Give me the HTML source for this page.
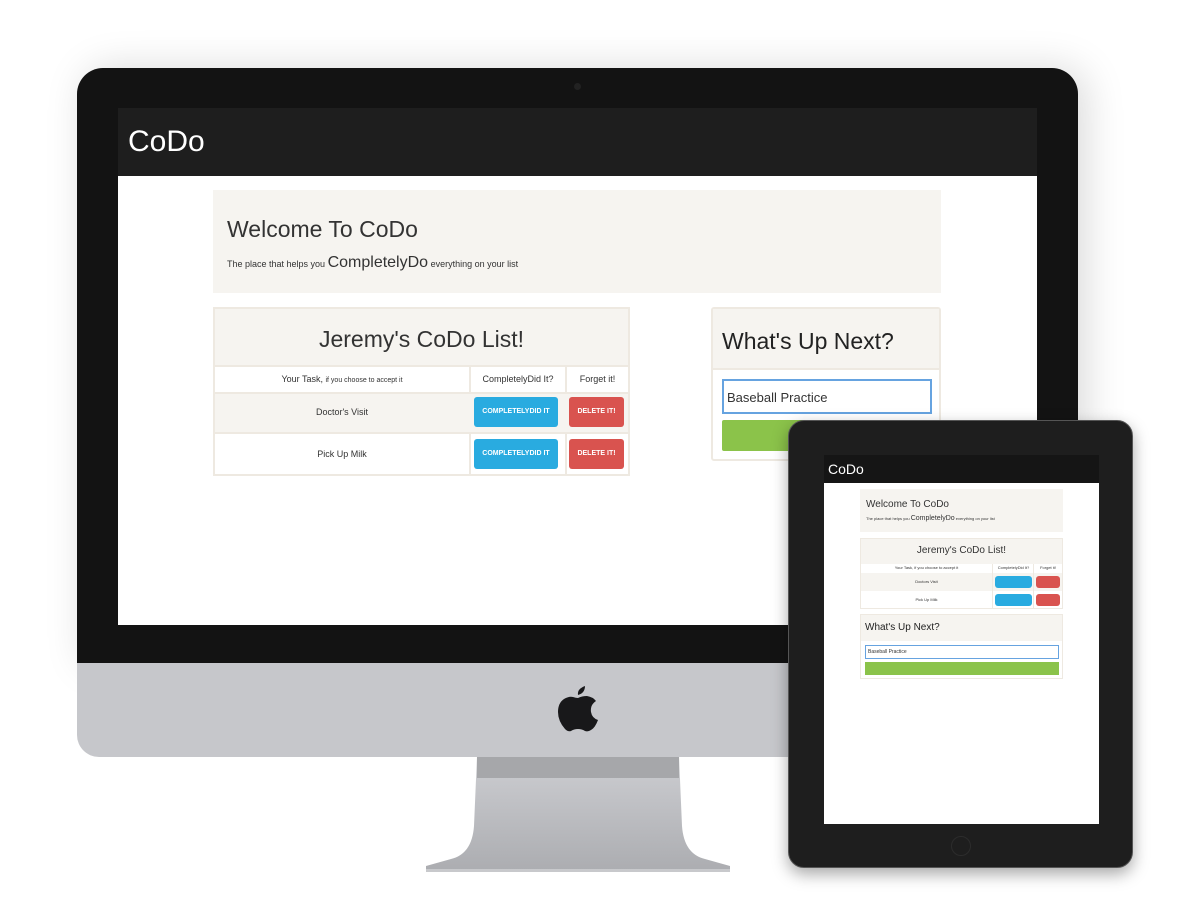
<!DOCTYPE html>
<html><head><meta charset="utf-8"><style>
*{margin:0;padding:0;box-sizing:border-box}
body{width:1196px;height:923px;background:#fff;position:relative;overflow:hidden;font-family:"Liberation Sans",sans-serif;color:#333}
.a{position:absolute}
.imac{left:77px;top:68px;width:1001px;height:596px;background:#131313;border-radius:26px 26px 0 0;box-shadow:8px 0 40px rgba(0,0,0,.15)}
.chin{left:77px;top:663px;width:1001px;height:94px;background:linear-gradient(90deg,#c6c7cb 0,#c6c7cb 80%,#a9aaae 100%);border-radius:0 0 22px 22px}
.scr{left:118px;top:108px;width:919px;height:517px;background:#fff;overflow:hidden}
.pan{background:#f6f4f0;border:1px solid #ebe6de}
.btnb{background:#29abe0;color:#fff;font-weight:bold;text-align:center;border-radius:3px}
.btnr{background:#d9534f;color:#fff;font-weight:bold;text-align:center;border-radius:3px}
.c{text-align:center}
</style></head><body>
<!-- stand -->
<svg class="a" style="left:420px;top:756px" width="320" height="120">
<defs><linearGradient id="g" x1="0" y1="0" x2="0" y2="1"><stop offset="0" stop-color="#cdced2"/><stop offset="1" stop-color="#acadb1"/></linearGradient></defs>
<path d="M57 0 H259 L262 70 Q264 98 285 103 L310 110 L310 114 H6 L6 110 L31 103 Q52 98 54 70 Z" fill="url(#g)"/>
<rect x="57" y="0" width="202" height="22" fill="#a6a7aa"/>
<rect x="6" y="113" width="304" height="3" fill="#c8c9cc"/>
</svg>
<div class="a imac"></div>
<div class="a" style="left:574px;top:83px;width:7px;height:7px;border-radius:50%;background:#222"></div>
<div class="a chin"></div>
<svg class="a" style="left:557px;top:684px" width="42" height="48" viewBox="0 0 42 48"><path d="M28 2 Q28 9 21 11 Q20 5 28 2Z M21 14 Q25 12 30 12 Q36 13 39 17 Q33 21 34 28 Q35 34 41 36 Q38 44 34 46 Q31 48 28 47 Q25 45 21 45 Q17 45 14 47 Q11 48 8 45 Q1 37 1 28 Q1 19 7 15 Q12 12 16 13 Q19 14 21 14Z" fill="#18181a"/></svg>
<div class="a scr">
 <div class="a" style="left:0;top:0;width:919px;height:68px;background:#1e1e1e"><div class="a" style="left:10px;top:17px;font-size:30px;color:#fff">CoDo</div></div>
 <div class="a pan" style="left:95px;top:82px;width:728px;height:103px;border:none">
  <div class="a" style="left:14px;top:26px;font-size:23px;color:#333">Welcome To CoDo</div>
  <div class="a" style="left:14px;top:64px;font-size:9px;white-space:nowrap">The place that helps you <span style="font-size:16px">CompletelyDo</span> everything on your list</div>
 </div>
 <div class="a" style="left:95px;top:199px;width:417px;height:169px;border:2px solid #eee9e1;background:#fff">
  <div class="a pan c" style="left:0;top:0;width:413px;height:58px;border:none;border-bottom:2px solid #eee9e1;font-size:23px;padding-top:17px">Jeremy's CoDo List!</div>
  <div class="a c" style="left:0;top:58px;width:254px;height:25px;font-size:9px;padding-top:7px">Your Task, <span style="font-size:7px">if you choose to accept it</span></div>
  <div class="a" style="left:254px;top:58px;width:2px;height:109px;background:#eee9e1"></div>
  <div class="a c" style="left:256px;top:58px;width:94px;height:25px;font-size:9px;padding-top:7px">CompletelyDid It?</div>
  <div class="a" style="left:350px;top:58px;width:2px;height:109px;background:#eee9e1"></div>
  <div class="a c" style="left:352px;top:58px;width:61px;height:25px;font-size:9px;padding-top:7px">Forget it!</div>
  <div class="a" style="left:0;top:83px;width:413px;height:42px;background:#f6f4f0;border-top:2px solid #eee9e1;border-bottom:2px solid #eee9e1"></div>
  <div class="a c" style="left:0;top:98px;width:254px;font-size:9px">Doctor's Visit</div>
  <div class="a c" style="left:0;top:140px;width:254px;font-size:9px">Pick Up Milk</div>
  <div class="a btnb" style="left:259px;top:88px;width:84px;height:30px;font-size:7px;padding-top:11px">COMPLETELYDID IT</div>
  <div class="a btnr" style="left:354px;top:88px;width:55px;height:30px;font-size:7px;padding-top:11px">DELETE IT!</div>
  <div class="a btnb" style="left:259px;top:130px;width:84px;height:30px;font-size:7px;padding-top:11px">COMPLETELYDID IT</div>
  <div class="a btnr" style="left:354px;top:130px;width:55px;height:30px;font-size:7px;padding-top:11px">DELETE IT!</div>
 </div>
 <div class="a" style="left:593px;top:199px;width:230px;height:154px;border:2px solid #eee9e1;background:#fff;border-radius:3px">
  <div class="a pan" style="left:0;top:0;width:226px;height:61px;border:none;border-bottom:2px solid #eee9e1;font-size:23px;padding:19px 0 0 9px;color:#222">What's Up Next?</div>
  <div class="a" style="left:9px;top:70px;width:210px;height:35px;border:2px solid #66a3e0;font-size:13px;padding:9px 0 0 3px;color:#333">Baseball Practice</div>
  <div class="a" style="left:9px;top:111px;width:210px;height:31px;background:#8bc34a;border-radius:2px"></div>
 </div>
 <div class="a" style="left:640px;top:280px;width:300px;height:250px;background:radial-gradient(ellipse at 90% 80%,rgba(0,0,0,.15),rgba(0,0,0,0) 60%)"></div>
</div>
<!-- tablet -->
<div class="a" style="left:788px;top:420px;width:345px;height:448px;background:#1e1e1e;border-radius:16px;border:1px solid #555;box-shadow:0 6px 16px rgba(0,0,0,.35)"></div>
<div class="a" style="left:951px;top:836px;width:20px;height:20px;border-radius:50%;border:1px solid #2c2c2c"></div>
<div class="a" style="left:824px;top:455px;width:275px;height:369px;background:#fff;overflow:hidden">
 <div class="a" style="left:0;top:0;width:275px;height:28px;background:#151515;color:#fff;font-size:14px;padding:6px 0 0 4px">CoDo</div>
 <div class="a pan" style="left:36px;top:34px;width:203px;height:43px;border:none">
  <div class="a" style="left:6px;top:10px;font-size:10px">Welcome To CoDo</div>
  <div class="a" style="left:6px;top:26px;font-size:4px;white-space:nowrap">The place that helps you <span style="font-size:7px">CompletelyDo</span> everything on your list</div>
 </div>
 <div class="a" style="left:36px;top:83px;width:203px;height:71px;border:1px solid #eee9e1;background:#fff">
  <div class="a pan c" style="left:0;top:0;width:201px;height:25px;border:none;font-size:10px;padding-top:6px">Jeremy's CoDo List!</div>
  <div class="a c" style="left:0;top:26px;width:131px;font-size:4px">Your Task, if you choose to accept it</div>
  <div class="a c" style="left:132px;top:26px;width:41px;font-size:4px">CompletelyDid It?</div>
  <div class="a c" style="left:173px;top:26px;width:28px;font-size:4px">Forget it!</div>
  <div class="a" style="left:0;top:34px;width:201px;height:18px;background:#f6f4f0"></div>
  <div class="a" style="left:131px;top:25px;width:1px;height:45px;background:#eee9e1"></div>
  <div class="a" style="left:172px;top:25px;width:1px;height:45px;background:#eee9e1"></div>
  <div class="a c" style="left:0;top:40px;width:131px;font-size:4px">Doctors Visit</div>
  <div class="a c" style="left:0;top:58px;width:131px;font-size:4px">Pick Up Milk</div>
  <div class="a btnb" style="left:134px;top:37px;width:37px;height:12px"></div>
  <div class="a btnr" style="left:175px;top:37px;width:24px;height:12px"></div>
  <div class="a btnb" style="left:134px;top:55px;width:37px;height:12px"></div>
  <div class="a btnr" style="left:175px;top:55px;width:24px;height:12px"></div>
 </div>
 <div class="a" style="left:36px;top:159px;width:203px;height:65px;border:1px solid #eee9e1;background:#fff">
  <div class="a pan" style="left:0;top:0;width:201px;height:26px;border:none;font-size:10px;padding:7px 0 0 4px;color:#222">What's Up Next?</div>
  <div class="a" style="left:4px;top:30px;width:194px;height:14px;border:1px solid #66a3e0;font-size:5px;padding:3px 0 0 2px">Baseball Practice</div>
  <div class="a" style="left:4px;top:47px;width:194px;height:13px;background:#8bc34a"></div>
 </div>
</div>
</body></html>
